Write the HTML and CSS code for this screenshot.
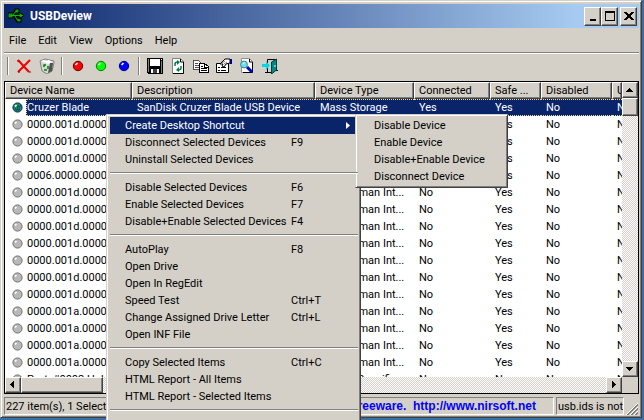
FILE: index.html
```
<!DOCTYPE html>
<html lang="en">
<head>
  <meta charset="utf-8">
  <title>USBDeview</title>
  <link rel="stylesheet" href="styles.css">
</head>
<body>
  <svg class="defs" aria-hidden="true">
    <symbol id="ball" viewBox="0 0 11 11">
      <circle cx="5.5" cy="5.5" r="4.6" fill="#b8b8b8" stroke="#707070"/>
      <path d="M3 4.5L4.5 3" stroke="#fff" stroke-width="1.6"/>
    </symbol>
  </svg>

  <div class="window">
    <header class="title-bar">
      <svg class="app-icon" viewBox="0 0 16 16">
        <path d="M2 7.500H14M4 7.500L7 3.500H9M6 8L9 12.500H11" stroke="#000" stroke-width="3" fill="none"/>
        <path d="M0 5h5v5H0zM7 1h4v4H7zM9 10h4v4H9zM11 4l5 3.500-5 3.500z" fill="#00a800" stroke="#000"/>
        <path d="M3 7.500H14M5 7L7.500 3.500H9M7 8L9.500 12.500H11" stroke="#00c000" fill="none"/>
      </svg>
      <h1>USBDeview</h1>
      <div class="window-buttons">
        <button type="button" aria-label="Minimize"><svg viewBox="0 0 10 10"><path d="M2 8h6v2H2z"/></svg></button>
        <button type="button" aria-label="Maximize"><svg viewBox="0 0 10 10"><path d="M0 0h10v10H0zM1 2v7h8V2z" fill-rule="evenodd"/></svg></button>
        <button type="button" class="close" aria-label="Close"><svg viewBox="0 0 10 10"><path d="M0 1h3v1h1v1h2V2h1V1h3v1H9v1H8v1H7v2h1v1h1v1h1v1H7V8H6V7H4v1H3v1H0V8h1V7h1V6h1V4H2V3H1V2H0z"/></svg></button>
      </div>
    </header>

    <nav class="menu-bar">
      <button type="button">File</button>
      <button type="button">Edit</button>
      <button type="button">View</button>
      <button type="button">Options</button>
      <button type="button">Help</button>
    </nav>

    <div class="toolbar">
      <span class="tool-sep"></span>
      <button type="button" aria-label="Disconnect">
        <svg viewBox="0 0 16 16"><path d="M2 2L13 14M14 2L2 14" stroke="#f00000" stroke-width="2"/><path d="M1 3h2M13 14h2M2 14h2" stroke="#900"/></svg>
      </button>
      <button type="button" aria-label="Uninstall">
        <svg viewBox="0 0 16 16">
          <path d="M1 3L6 1l9 2v2l-2 8-5 3-5-3z" fill="#d8d8d8" stroke="#808080"/>
          <path d="M11 5l3 0-1 8-4 2z" fill="#505050"/>
          <path d="M2 3l3-1 2 1 3-1 3 2-4 2z" fill="#fff"/>
          <path d="M7 7H5v2M5 12h3M9 8v3" stroke="#008000" stroke-width="1.500" fill="none"/>
        </svg>
      </button>
      <span class="tool-sep"></span>
      <button type="button" aria-label="Disable">
        <svg viewBox="0 0 16 16"><circle cx="8" cy="8" r="4.700" fill="#f00" stroke="#600000"/><path d="M5.500 7l2-2" stroke="#fff" stroke-width="1.600"/></svg>
      </button>
      <button type="button" aria-label="Enable">
        <svg viewBox="0 0 16 16"><circle cx="8" cy="8" r="4.700" fill="#0f0" stroke="#008000"/><path d="M5.500 7l2-2" stroke="#fff" stroke-width="1.600"/></svg>
      </button>
      <button type="button" aria-label="Disable and enable">
        <svg viewBox="0 0 16 16"><circle cx="8" cy="8" r="4.700" fill="#00f" stroke="#000070"/><path d="M5.500 7l2-2" stroke="#fff" stroke-width="1.600"/></svg>
      </button>
      <span class="tool-sep"></span>
      <button type="button" aria-label="Save">
        <svg viewBox="0 0 16 16" shape-rendering="crispEdges">
          <path d="M0 0h16v16H1L0 15z"/>
          <path d="M1 1h1v13H1zM14 3h1v12h-1z" fill="#808080"/>
          <path d="M3 1h10v7H3zM4 11h2v4H4zM10 11h2v4h-2zM14 1h1v1h-1z" fill="#fff"/>
          <path d="M6 11h4v4H6z" fill="#404040"/>
        </svg>
      </button>
      <button type="button" aria-label="Refresh">
        <svg viewBox="0 0 16 16">
          <path d="M2.500.5h8l3 3v12h-11z" fill="#fff" stroke="#808080"/>
          <path d="M13.500 4v11.500H3M10.500 1v3h3" stroke="#000" fill="none"/>
          <path d="M5 8V6q0-2 3-2M11 8v2q0 2-3 2" stroke="#008040" stroke-width="1.500" fill="none"/>
          <path d="M7 2l3 2-3 3zM9 9v5l-3-2z" fill="#008040"/>
        </svg>
      </button>
      <button type="button" aria-label="Copy">
        <svg viewBox="0 0 16 16" shape-rendering="crispEdges">
          <path d="M.5 2.500h5l3 3v6h-8z" fill="#fff" stroke="#505050"/>
          <path d="M2 5h3M2 7h4M2 9h4" stroke="#505050"/>
          <path d="M6.500 5.500h5l4 3v6h-9z" fill="#fff" stroke="#000"/>
          <path d="M11.500 5v4h4M8 8.500h2M8 10.500h6M8 12.500h6" stroke="#000" fill="none"/>
        </svg>
      </button>
      <button type="button" aria-label="Properties">
        <svg viewBox="0 0 16 16">
          <path d="M.5 5.500h12v9H.5z" fill="#fff" stroke="#000"/>
          <path d="M2 9.500h2M5 9.500h5M2 12.500h2M5 12.500h5" stroke="#000"/>
          <path d="M4 6l5-5h5v4l-4 1-2 3-2-1 1-2z" fill="#fff" stroke="#000"/>
          <path d="M14 1h2v5h-2z" fill="#000080"/>
          <path d="M6 5l3-2M8 6l3-2" stroke="#808080"/>
        </svg>
      </button>
      <button type="button" aria-label="Find">
        <svg viewBox="0 0 16 16">
          <path d="M2.500.5h8l3 3v11h-11z" fill="#fff" stroke="#909090"/>
          <path d="M13.500 4v10.500H4M10.500 1v3h3" stroke="#000" fill="none"/>
          <path d="M8 9l5 5" stroke="#0000c0" stroke-width="3"/>
          <circle cx="5" cy="6.500" r="3.400" fill="#60e8f0" stroke="#408090"/>
          <path d="M4 6l2-2" stroke="#fff"/>
        </svg>
      </button>
      <button type="button" aria-label="Exit">
        <svg viewBox="0 0 16 16">
          <path d="M5.500 14V1.500h9M3 14.500h6M13 12.500h3" stroke="#000" fill="none"/>
          <path d="M9.500 4l5-3v11l-5 4z" fill="#008888" stroke="#004040"/>
          <path d="M0 6h4V3l4 4.500L4 12V9H0z" fill="#00d8e8"/>
          <path d="M13 7v2" stroke="#fff"/>
        </svg>
      </button>
    </div>

    <main class="list">
      <div class="list-view">
        <table>
          <colgroup>
            <col class="col-name"><col class="col-description"><col class="col-type"><col class="col-connected"><col class="col-safe"><col class="col-disabled"><col>
          </colgroup>
          <thead>
            <tr><th>Device Name</th><th>Description</th><th>Device Type</th><th>Connected</th><th>Safe ...</th><th>Disabled</th><th>USB Hub</th></tr>
          </thead>
          <tbody>
            <tr class="selected"><td><div class="name"><svg viewBox="0 0 11 11"><circle cx="5.500" cy="5.500" r="4.600" fill="#1c8a58" stroke="#0a246a"/><path d="M3 4.500L4.500 3" stroke="#fff" stroke-width="1.600"/><path d="M3 7h1M5 7h1M7 7h1M4 8h1M6 8h1M6 4h1M8 4h1M5 5h1M7 5h1" stroke="#0a246a"/></svg><span>Cruzer Blade</span></div></td><td>SanDisk Cruzer Blade USB Device</td><td>Mass Storage</td><td>Yes</td><td>Yes</td><td>No</td><td>No</td></tr>
            <tr><td><div class="name"><svg><use href="#ball"/></svg><span>0000.001d.0000</span></div></td><td></td><td>HID (Human Int...</td><td>No</td><td>Yes</td><td>No</td><td>No</td></tr>
            <tr><td><div class="name"><svg><use href="#ball"/></svg><span>0000.001d.0000</span></div></td><td></td><td>HID (Human Int...</td><td>No</td><td>Yes</td><td>No</td><td>No</td></tr>
            <tr><td><div class="name"><svg><use href="#ball"/></svg><span>0000.001d.0000</span></div></td><td></td><td>HID (Human Int...</td><td>No</td><td>Yes</td><td>No</td><td>No</td></tr>
            <tr><td><div class="name"><svg><use href="#ball"/></svg><span>0006.0000.0000</span></div></td><td></td><td>HID (Human Int...</td><td>No</td><td>Yes</td><td>No</td><td>No</td></tr>
            <tr><td><div class="name"><svg><use href="#ball"/></svg><span>0000.001d.0000</span></div></td><td></td><td>HID (Human Int...</td><td>No</td><td>Yes</td><td>No</td><td>No</td></tr>
            <tr><td><div class="name"><svg><use href="#ball"/></svg><span>0000.001d.0000</span></div></td><td></td><td>HID (Human Int...</td><td>No</td><td>Yes</td><td>No</td><td>No</td></tr>
            <tr><td><div class="name"><svg><use href="#ball"/></svg><span>0000.001d.0000</span></div></td><td></td><td>HID (Human Int...</td><td>No</td><td>Yes</td><td>No</td><td>No</td></tr>
            <tr><td><div class="name"><svg><use href="#ball"/></svg><span>0000.001d.0000</span></div></td><td></td><td>HID (Human Int...</td><td>No</td><td>Yes</td><td>No</td><td>No</td></tr>
            <tr><td><div class="name"><svg><use href="#ball"/></svg><span>0000.001d.0000</span></div></td><td></td><td>HID (Human Int...</td><td>No</td><td>Yes</td><td>No</td><td>No</td></tr>
            <tr><td><div class="name"><svg><use href="#ball"/></svg><span>0000.001d.0000</span></div></td><td></td><td>HID (Human Int...</td><td>No</td><td>Yes</td><td>No</td><td>No</td></tr>
            <tr><td><div class="name"><svg><use href="#ball"/></svg><span>0000.001d.0000</span></div></td><td></td><td>HID (Human Int...</td><td>No</td><td>Yes</td><td>No</td><td>No</td></tr>
            <tr><td><div class="name"><svg><use href="#ball"/></svg><span>0000.001a.0000</span></div></td><td></td><td>HID (Human Int...</td><td>No</td><td>Yes</td><td>No</td><td>No</td></tr>
            <tr><td><div class="name"><svg><use href="#ball"/></svg><span>0000.001a.0000</span></div></td><td></td><td>HID (Human Int...</td><td>No</td><td>Yes</td><td>No</td><td>No</td></tr>
            <tr><td><div class="name"><svg><use href="#ball"/></svg><span>0000.001a.0000</span></div></td><td></td><td>HID (Human Int...</td><td>No</td><td>Yes</td><td>No</td><td>No</td></tr>
            <tr><td><div class="name"><svg><use href="#ball"/></svg><span>0000.001a.0000</span></div></td><td></td><td>HID (Human Int...</td><td>No</td><td>Yes</td><td>No</td><td>No</td></tr>
            <tr><td><div class="name"><svg><use href="#ball"/></svg><span>Port_#0002.Hub</span></div></td><td></td><td>Vendor Specific</td><td>No</td><td>No</td><td>No</td><td>No</td></tr>
          </tbody>
        </table>
      </div>
      <div class="scrollbar vertical">
        <button type="button" aria-label="Scroll up"><svg viewBox="0 0 8 8"><path d="M0 6h7L3.500 2z"/></svg></button>
        <span class="thumb"></span>
        <button type="button" class="end" aria-label="Scroll down"><svg viewBox="0 0 8 8"><path d="M0 2h7L3.500 6z"/></svg></button>
      </div>
      <div class="scrollbar horizontal">
        <button type="button" aria-label="Scroll left"><svg viewBox="0 0 8 8"><path d="M5 0v7L1 3.500z"/></svg></button>
        <span class="thumb"></span>
        <button type="button" class="end" aria-label="Scroll right"><svg viewBox="0 0 8 8"><path d="M2 0v7l4-3.500z"/></svg></button>
      </div>
    </main>

    <footer class="status-bar">
      <div class="panel count">227 item(s), 1 Selected</div>
      <div class="panel site"><a href="#">NirSoft Freeware.&nbsp; http://www.nirsoft.net</a></div>
      <div class="panel ids">usb.ids is not</div>
      <svg class="grip" viewBox="0 0 12 12">
        <path d="M0 12L12 0M4 12l8-8M8 12l4-4" stroke="#fff"/>
        <path d="M1 12L12 1M2 12L12 2M5 12l7-7M6 12l6-6M9 12l3-3M10 12l2-2" stroke="#808080"/>
      </svg>
    </footer>
  </div>

  <ul class="popup context-menu">
    <li class="open">
      <button type="button"><span>Create Desktop Shortcut</span><svg viewBox="0 0 4 7"><path d="M0 0v7l4-3.500z"/></svg></button>
      <ul class="popup submenu">
        <li><button type="button">Disable Device</button></li>
        <li><button type="button">Enable Device</button></li>
        <li><button type="button">Disable+Enable Device</button></li>
        <li><button type="button">Disconnect Device</button></li>
      </ul>
    </li>
    <li><button type="button"><span>Disconnect Selected Devices</span><kbd>F9</kbd></button></li>
    <li><button type="button"><span>Uninstall Selected Devices</span></button></li>
    <li class="separator"></li>
    <li><button type="button"><span>Disable Selected Devices</span><kbd>F6</kbd></button></li>
    <li><button type="button"><span>Enable Selected Devices</span><kbd>F7</kbd></button></li>
    <li><button type="button"><span>Disable+Enable Selected Devices</span><kbd>F4</kbd></button></li>
    <li class="separator"></li>
    <li><button type="button"><span>AutoPlay</span><kbd>F8</kbd></button></li>
    <li><button type="button"><span>Open Drive</span></button></li>
    <li><button type="button"><span>Open In RegEdit</span></button></li>
    <li><button type="button"><span>Speed Test</span><kbd>Ctrl+T</kbd></button></li>
    <li><button type="button"><span>Change Assigned Drive Letter</span><kbd>Ctrl+L</kbd></button></li>
    <li><button type="button"><span>Open INF File</span></button></li>
    <li class="separator"></li>
    <li><button type="button"><span>Copy Selected Items</span><kbd>Ctrl+C</kbd></button></li>
    <li><button type="button"><span>HTML Report - All Items</span></button></li>
    <li><button type="button"><span>HTML Report - Selected Items</span></button></li>
    <li class="separator"></li>
    <li><button type="button"><span>Choose Columns</span></button></li>
  </ul>
</body>
</html>
```
FILE: styles.css
```
:root {
  --face: #d4d0c8;
  --light: #ffffff;
  --shadow: #808080;
  --dark: #404040;
  --navy: #0a246a;
  --desktop: #3a6ea5;
}

* {
  margin: 0;
  padding: 0;
  box-sizing: border-box;
}

body {
  position: relative;
  height: 100vh;
  padding: 0 2px 2px 0;
  overflow: hidden;
  background: var(--desktop);
  color: #000;
  font: 11px/17px Tahoma, Roboto, sans-serif;
}

button,
kbd {
  font: inherit;
  color: inherit;
}

button {
  border: none;
  background: none;
  white-space: nowrap;
}

.defs {
  position: absolute;
  width: 0;
  height: 0;
}

.window {
  display: flex;
  flex-direction: column;
  height: 100%;
  padding: 2px 2px 2px 2px;
  background: var(--face);
  border: 1px solid;
  border-color: var(--face) var(--dark) var(--dark) var(--face);
  box-shadow: inset 1px 1px var(--light), inset -1px -1px var(--shadow);
}

/* Title bar */
.title-bar {
  display: flex;
  align-items: center;
  height: 24px;
  margin: 1px 0 0 1px;
  padding: 0 2px 0 4px;
  background: linear-gradient(90deg, var(--navy), #a6caf0 90%);
  color: #fff;
}

.app-icon {
  width: 16px;
  height: 16px;
}

.title-bar h1 {
  flex: 1;
  padding-left: 6px;
  font-size: 12px;
}

.window-buttons {
  display: flex;
}

.window-buttons button,
.scrollbar button,
.thumb {
  background: var(--face);
  border: 1px solid;
  border-color: var(--light) var(--dark) var(--dark) var(--light);
  box-shadow: inset -1px -1px var(--shadow);
}

.window-buttons button {
  display: flex;
  align-items: center;
  justify-content: center;
  width: 17px;
  height: 19px;
}

.window-buttons .close {
  margin-left: 2px;
}

.window-buttons svg {
  width: 10px;
  height: 10px;
  shape-rendering: crispEdges;
}

/* Menu bar */
.menu-bar {
  display: flex;
  gap: 12px;
  height: 25px;
  margin-left: 1px;
  padding: 0 5px;
  border-bottom: 1px solid var(--shadow);
}

/* Toolbar */
.toolbar {
  display: flex;
  align-items: center;
  height: 28px;
  margin-left: 1px;
  padding-bottom: 4px;
  border-top: 1px solid var(--light);
}

.toolbar button {
  width: 23px;
  height: 22px;
}

.toolbar svg {
  display: block;
  width: 16px;
  height: 16px;
  margin: auto;
}

.tool-sep {
  width: 2px;
  height: 18px;
  margin: 0 3px;
  border-left: 1px solid var(--shadow);
  border-right: 1px solid var(--light);
}

/* Device list */
.list {
  display: grid;
  flex: 1;
  grid-template-columns: 1fr 16px;
  grid-template-rows: 1fr 16px;
  min-height: 0;
  margin-left: 1px;
  border: 1px solid #000;
  background: var(--face);
}

.list-view {
  min-width: 0;
  min-height: 0;
  overflow: hidden;
  background: #fff;
}

table {
  width: 100%;
  table-layout: fixed;
  border-collapse: separate;
  border-spacing: 0;
}

.col-name { width: 127px; }
.col-description { width: 183px; }
.col-type { width: 99px; }
.col-connected { width: 76px; }
.col-safe { width: 51px; }
.col-disabled { width: 71px; }

th,
td {
  height: 17px;
  padding: 0 0 0 5px;
  overflow: hidden;
  line-height: 15px;
  text-align: left;
  font-weight: normal;
  white-space: nowrap;
}

th {
  background: var(--face);
  border: 1px solid;
  border-color: var(--light) var(--dark) var(--dark) var(--light);
  box-shadow: inset -1px -1px var(--shadow);
  padding-left: 4px;
}

td:first-child {
  padding: 0;
}

td {
  border: 1px none #f5db95;
}

.name {
  display: flex;
  align-items: center;
}

.name svg {
  flex: none;
  width: 11px;
  height: 11px;
  margin: 0 3px 0 7px;
}

.name span {
  flex: 1;
  padding-left: 1px;
}

.selected td {
  background: var(--navy);
  color: #fff;
  border-style: dotted none;
}

.selected td:first-child {
  background: #fff;
  border-style: none;
}

.selected .name span {
  background: var(--navy);
  border: 1px dotted #f5db95;
  border-right: none;
  padding-left: 0;
}

/* Scroll bars */
.scrollbar {
  display: flex;
  background: repeating-conic-gradient(var(--face) 0 25%, #fff 0 50%) 0 0 / 2px 2px;
}

.scrollbar button {
  display: flex;
  flex: none;
  align-items: center;
  justify-content: center;
  width: 16px;
  height: 16px;
}

.scrollbar svg {
  width: 8px;
  height: 8px;
  shape-rendering: crispEdges;
}

.vertical {
  flex-direction: column;
}

.vertical .thumb {
  height: 18px;
}

.horizontal .thumb {
  width: 82px;
}

.vertical .end {
  margin-top: auto;
}

.horizontal .end {
  margin-left: auto;
}

/* Status bar */
.status-bar {
  display: flex;
  gap: 2px;
  margin: 3px 0 0 1px;
}

.panel {
  height: 18px;
  padding-left: 1px;
  overflow: hidden;
  line-height: 17px;
  white-space: nowrap;
  border: 1px solid;
  border-color: var(--shadow) var(--light) var(--light) var(--shadow);
}

.count {
  width: 297px;
}

.site {
  flex: 1;
  padding-left: 3px;
}

.site a {
  color: #0000ff;
  font: bold 12px/16px "Liberation Sans", Arial, sans-serif;
  text-decoration: none;
}

.ids {
  width: 68px;
}

.grip {
  align-self: flex-end;
  width: 12px;
  height: 12px;
  margin-right: 1px;
}

/* Popup menus */
.popup {
  position: absolute;
  padding: 1px 2px;
  list-style: none;
  background: var(--face);
  color: #000;
  border: 1px solid;
  border-color: var(--face) var(--dark) var(--dark) var(--face);
  box-shadow: inset 1px 1px var(--light), inset -1px -1px var(--shadow);
}

.context-menu {
  top: 114px;
  left: 106px;
  width: 255px;
  padding: 2px 2px 2px 3px;
}

.popup li {
  position: relative;
}

.popup button {
  display: grid;
  grid-template-columns: 166px 1fr auto;
  align-items: center;
  width: 100%;
  height: 17px;
  padding: 0 8px 0 15px;
  line-height: 17px;
  text-align: left;
}

.popup .open > button {
  background: var(--navy);
  color: #fff;
}

.popup button svg {
  grid-column: 3;
  width: 4px;
  height: 7px;
  fill: #fff;
}

.popup .separator {
  height: 2px;
  margin: 4px 0 5px;
  border-top: 1px solid var(--shadow);
  border-bottom: 1px solid var(--light);
}

.popup .submenu {
  top: -3px;
  left: calc(100% - 3px);
  width: 153px;
  padding: 2px 3px;
}

.submenu button {
  display: block;
}
```
